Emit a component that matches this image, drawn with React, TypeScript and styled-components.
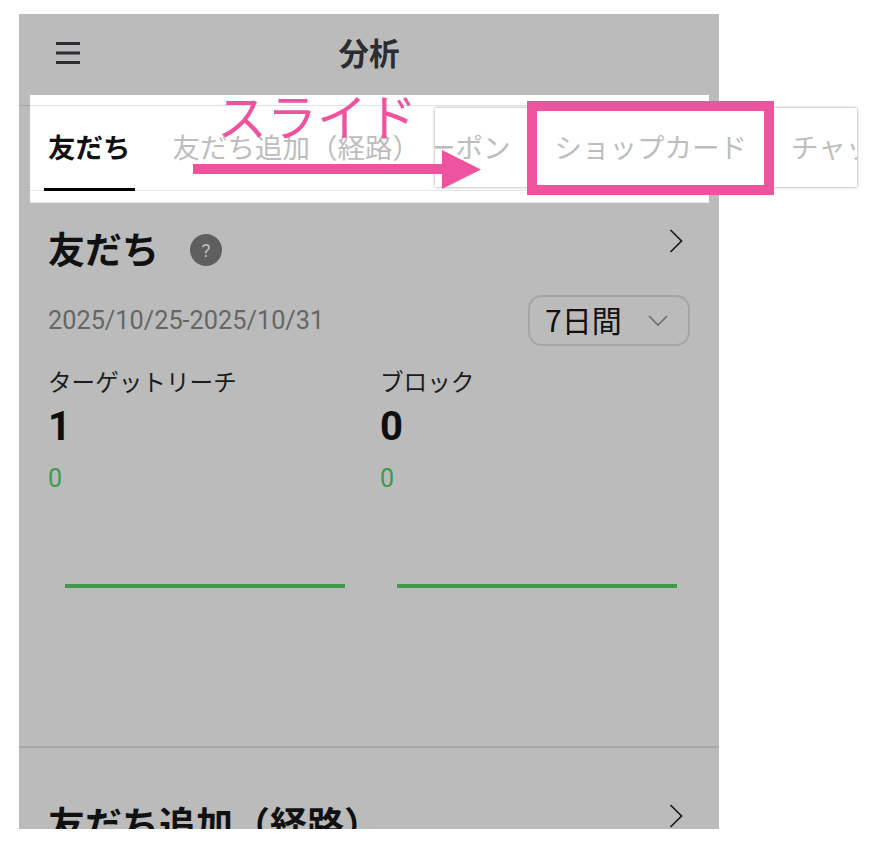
import styled, { createGlobalStyle } from "styled-components";

const GlobalStyle = createGlobalStyle`
  html, body {
    margin: 0;
    padding: 0;
    background: #fff;
    font-family: "Noto Sans CJK JP", "Noto Sans", sans-serif;
  }
`;

const Page = styled.div`
  position: relative;
  width: 876px;
  height: 844px;
  padding: 14px 0 0 19px;
  box-sizing: border-box;
  overflow: hidden;
`;

const Phone = styled.div`
  width: 700px;
  height: 815px;
  background: #bbbbbb;
  overflow: hidden;
`;

const TopBar = styled.header`
  height: 92px;
  padding: 0 29px 16px;
  box-sizing: border-box;
  border-bottom: 1px solid #a8a8a8;
  display: flex;
  align-items: center;
  justify-content: center;
  position: relative;
`;

const MenuIcon = styled.svg`
  position: absolute;
  left: 37px;
  top: 27px;
  width: 24px;
  height: 24px;
`;

const TopTitle = styled.h1`
  margin: 0;
  font-size: 30.5px;
  font-weight: 700;
  line-height: 40px;
  color: #2b2d30;
`;

const TabGap = styled.div`
  height: 124px;
`;

const Section = styled.section`
  padding: 0 29px;
`;

const TitleRow = styled.div`
  height: 40px;
  display: flex;
  align-items: center;
  justify-content: space-between;
`;

const TitleLeft = styled.div`
  display: flex;
  align-items: center;
  gap: 31px;
`;

const SectionTitle = styled.h2`
  margin: 0;
  padding-bottom: 4px;
  font-size: 37px;
  font-weight: 700;
  line-height: 36px;
  color: #111;
  white-space: nowrap;
`;

const HelpBadge = styled.span`
  width: 32px;
  height: 32px;
  border-radius: 50%;
  background: #5f5f5f;
  color: #bdbdbd;
  display: flex;
  align-items: center;
  justify-content: center;
  font: 400 19px "Roboto", sans-serif;
`;

const DateRow = styled.div`
  display: flex;
  align-items: center;
  justify-content: space-between;
  margin-top: 25px;
`;

const DateText = styled.span`
  font: 400 25.3px "Roboto", sans-serif;
  color: #666;
`;

const RangeSelect = styled.div`
  width: 162px;
  height: 51px;
  box-sizing: border-box;
  border: 2px solid #a5a5a5;
  border-radius: 14px;
  display: flex;
  align-items: center;
  justify-content: space-between;
  padding: 0 20px 4px 15px;
  font-size: 30px;
  color: #111;
`;

const RangeCaret = styled.svg`
  width: 20px;
  height: 12px;
  margin-top: 4px;
`;

const StatGrid = styled.div`
  display: grid;
  grid-template-columns: 332px 1fr;
  margin-top: 17px;
`;

const StatLabel = styled.div`
  font-size: 23.6px;
  line-height: 36px;
  color: #1c1c1c;
`;

const StatValue = styled.div`
  font: 700 40px/50px "Roboto", sans-serif;
  color: #0e0e0e;
  margin-top: 3px;
`;

const StatDelta = styled.div`
  font: 400 25px/36px "Roboto", sans-serif;
  color: #41994c;
  margin-top: 9px;
`;

const ChartLine = styled.div`
  width: 280px;
  height: 4px;
  margin: 87px 0 0 17px;
  background: #41994c;
`;

const Divider = styled.hr`
  margin: 158px 0 0;
  border: 0;
  border-top: 2px solid #a8a8a8;
`;

const NextSection = styled(Section)`
  margin-top: 57px;
`;

const Chevron = styled.svg`
  width: 14px;
  height: 24px;
  margin: 0 7px 18px 0;
  flex: none;
`;

const WhiteStrip = styled.div`
  position: absolute;
  left: 30px;
  top: 95px;
  width: 679px;
  height: 108px;
  box-sizing: border-box;
  background: #fff;
  border-bottom: 1px solid #e5e5e5;
`;

const StripLines = styled.div`
  height: 86px;
  margin-top: 10px;
  box-sizing: border-box;
  border-top: 1px solid #dfe3e6;
  border-bottom: 1px solid #e4e6e8;
  display: flex;
  padding-left: 14px;
  gap: 34px;
`;

const Tab = styled.div<{ $active?: boolean }>`
  height: 85px;
  padding: 0 4px;
  line-height: 80px;
  font-size: 27.5px;
  white-space: nowrap;
  font-weight: ${(p) => (p.$active ? 700 : 400)};
  color: ${(p) => (p.$active ? "#111" : "#bdbdbd")};
  border-bottom: ${(p) => (p.$active ? "3px solid #000" : "0")};
  box-sizing: border-box;
`;

const ShotCard = styled.div`
  position: absolute;
  left: 435px;
  top: 108px;
  width: 422px;
  height: 79px;
  background: #fff;
  box-shadow: 0 0 3px rgba(0, 0, 0, 0.4);
  overflow: hidden;
  display: flex;
  gap: 44px;
  white-space: nowrap;
  font-size: 27.5px;
  line-height: 76px;
  color: #bdbdbd;
`;

const ClippedStart = styled.span`
  margin-left: -7px;
  width: 84px;
`;

const PinkBox = styled.div`
  position: absolute;
  left: 527px;
  top: 101px;
  width: 247px;
  height: 94px;
  box-sizing: border-box;
  border: 10px solid #ee539f;
`;

const PinkLabel = styled.div`
  position: absolute;
  left: 217px;
  top: 82px;
  font-size: 50px;
  line-height: 64px;
  color: #ee539f;
  white-space: nowrap;
`;

const ArrowMark = styled.svg`
  position: absolute;
  left: 193px;
  top: 150px;
  width: 288px;
  height: 39px;
`;

const ChevronIcon = () => (
  <Chevron viewBox="0 0 14 24">
    <path d="M1.5 1 L12.5 12 L1.5 23" fill="none" stroke="#1a1a1a" strokeWidth="1.7" />
  </Chevron>
);

export default function App() {
  return (
    <>
      <GlobalStyle />
      <Page>
        <Phone>
          <TopBar>
            <MenuIcon viewBox="0 0 24 24">
              <path d="M0 2.5h24M0 12h24M0 21.5h24" stroke="#2b2d30" strokeWidth="3" />
            </MenuIcon>
            <TopTitle>分析</TopTitle>
          </TopBar>
          <TabGap />
          <Section>
            <TitleRow>
              <TitleLeft>
                <SectionTitle>友だち</SectionTitle>
                <HelpBadge>?</HelpBadge>
              </TitleLeft>
              <ChevronIcon />
            </TitleRow>
            <DateRow>
              <DateText>2025/10/25-2025/10/31</DateText>
              <RangeSelect>
                7日間
                <RangeCaret viewBox="0 0 20 12">
                  <path d="M1 1 L10 10 L19 1" fill="none" stroke="#6e6e6e" strokeWidth="1.6" />
                </RangeCaret>
              </RangeSelect>
            </DateRow>
            <StatGrid>
              <div>
                <StatLabel>ターゲットリーチ</StatLabel>
                <StatValue>1</StatValue>
                <StatDelta>0</StatDelta>
                <ChartLine />
              </div>
              <div>
                <StatLabel>ブロック</StatLabel>
                <StatValue>0</StatValue>
                <StatDelta>0</StatDelta>
                <ChartLine />
              </div>
            </StatGrid>
          </Section>
          <Divider />
          <NextSection>
            <TitleRow>
              <SectionTitle>友だち追加（経路）</SectionTitle>
              <ChevronIcon />
            </TitleRow>
          </NextSection>
        </Phone>

        <WhiteStrip>
          <StripLines>
            <Tab $active>友だち</Tab>
            <Tab>友だち追加（経路）</Tab>
          </StripLines>
        </WhiteStrip>
        <ShotCard>
          <ClippedStart>ーポン</ClippedStart>
          <span>ショップカード</span>
          <span>チャット</span>
        </ShotCard>
        <PinkBox />
        <PinkLabel>スライド</PinkLabel>
        <ArrowMark viewBox="0 0 288 39">
          <path d="M0 14h249V0l39 19.5L249 39V24H0z" fill="#ee539f" />
        </ArrowMark>
      </Page>
    </>
  );
}
